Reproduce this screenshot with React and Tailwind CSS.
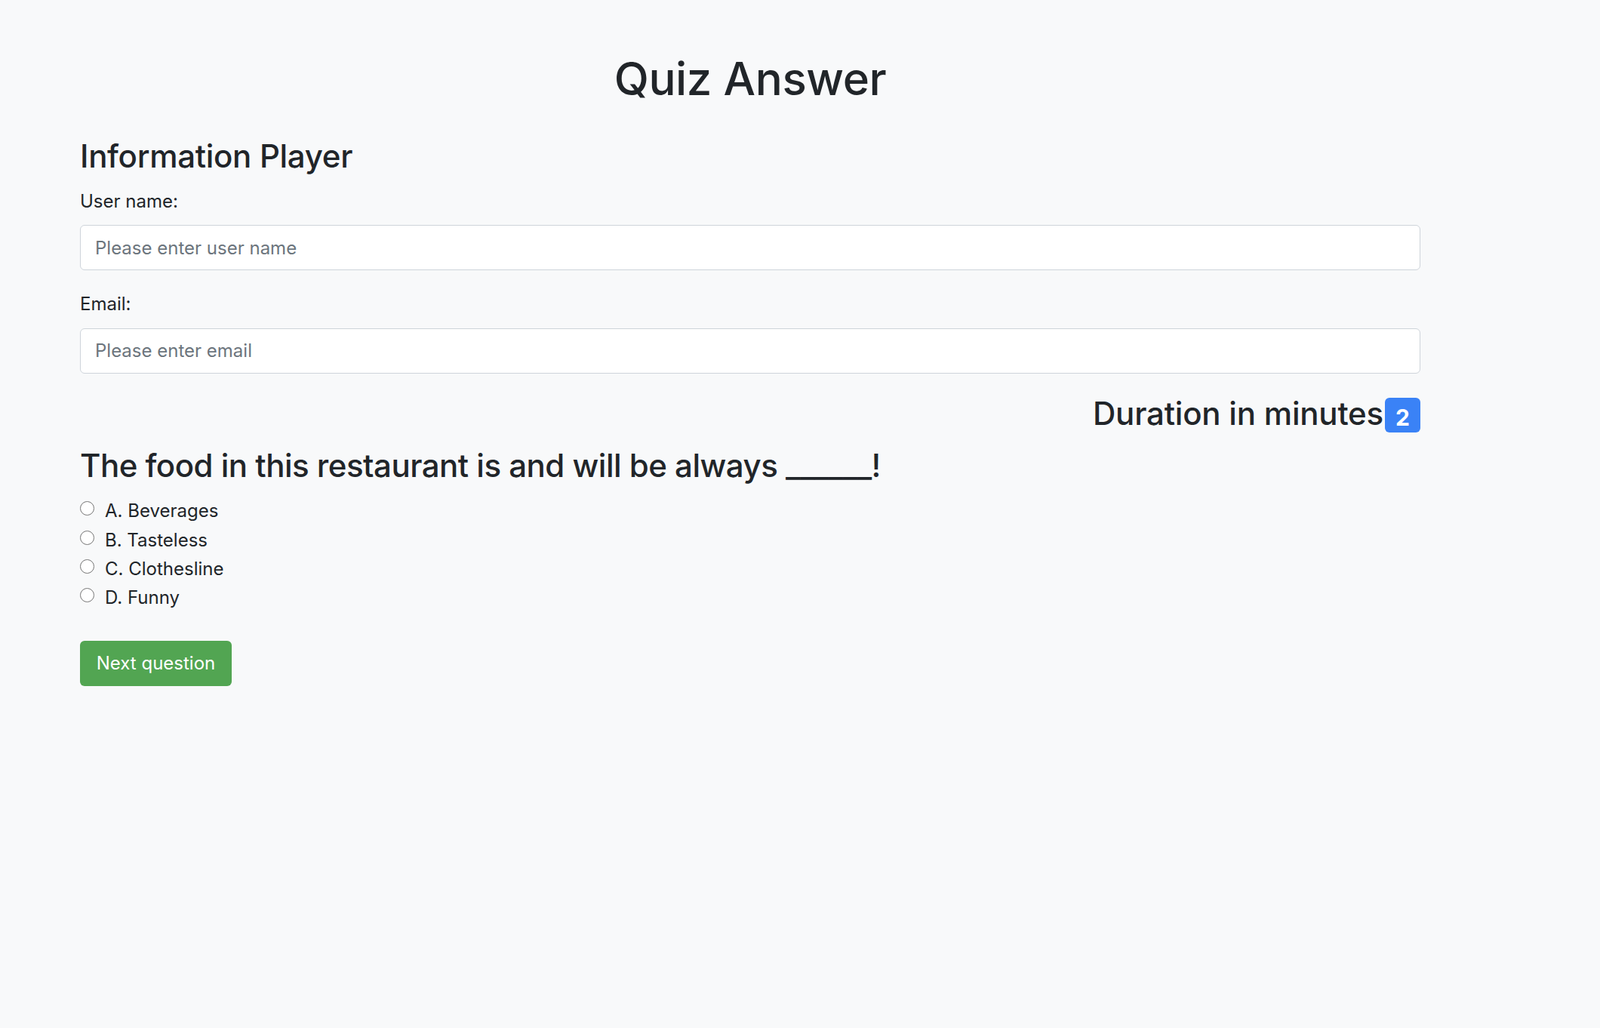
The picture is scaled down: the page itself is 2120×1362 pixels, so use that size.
import React from "react";

const options = ["A. Beverages", "B. Tasteless", "C. Clothesline", "D. Funny"];

export default function App() {
  return (
    <div
      className="min-h-screen w-full bg-[#f8f9fa] text-[#212529]"
      style={{ fontFamily: "Inter, 'Noto Sans', sans-serif" }}
    >
      <div className="ml-[106px] w-[1776px] pt-[68px]">
        <h1 className="text-center text-[60px] leading-[72px] font-medium tracking-[-0.4px]">Quiz Answer</h1>

        <h3 className="mt-[42px] text-[42px] leading-[50.4px] font-medium tracking-[-0.3px]">Information Player</h3>

        <label className="mt-[16.3px] block text-[24px] leading-[36px]">User name:</label>
        <input
          type="text"
          placeholder="Please enter user name"
          className="mt-[13.3px] block h-[60px] w-full rounded-[6px] border border-[#ced4da] bg-white px-[19px] text-[24px] leading-[36px] outline-none placeholder:text-[#6c757d]"
        />

        <label className="mt-[26.7px] block text-[24px] leading-[36px]">Email:</label>
        <input
          type="email"
          placeholder="Please enter email"
          className="mt-[14.3px] block h-[60px] w-full rounded-[6px] border border-[#ced4da] bg-white px-[19px] text-[24px] leading-[36px] outline-none placeholder:text-[#6c757d]"
        />

        <div className="mt-[28px] flex items-start justify-end">
          <h3 className="text-[42px] leading-[50.4px] font-medium tracking-[-0.2px]">Duration in minutes</h3>
          <span className="ml-[2px] mt-[4px] flex h-[46px] w-[47px] justify-center rounded-[6px] bg-[#3a82f6] pt-[11px] text-[30px] leading-[30px] font-bold text-white">
            2
          </span>
        </div>

        <h3 className="mt-[18.6px] text-[42px] leading-[50.4px] font-medium tracking-[-0.5px]">
          The food in this restaurant is and will be always ______!
        </h3>

        <div className="mt-[17px] flex flex-col gap-[2.33px]">
          {options.map((o, i) => (
            <label key={i} className="flex h-[36px] items-center text-[24px] leading-[36px]">
              <input
                type="radio"
                name="answer"
                className="mr-[14px] mt-[-7px] h-[19px] w-[19px] shrink-0 appearance-none rounded-full border-[1.5px] border-[#767676] bg-white"
              />
              <span>{o}</span>
            </label>
          ))}
        </div>

        <button className="mt-[39px] flex h-[60px] w-[201px] items-center justify-center rounded-[6px] bg-[#52a552] text-[24px] leading-[36px] text-white">
          Next question
        </button>
      </div>
    </div>
  );
}
